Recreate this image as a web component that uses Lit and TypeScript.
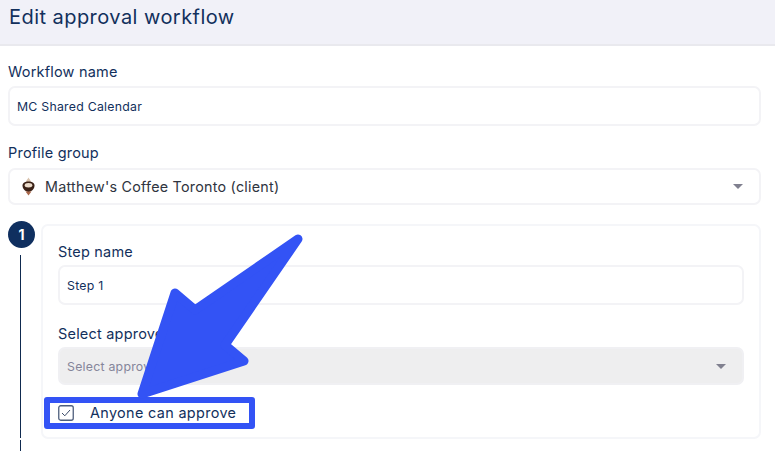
import { LitElement, html, css } from "lit";
import { customElement } from "lit/decorators.js";

@customElement("app-root")
export class AppRoot extends LitElement {
  static styles = css`
    :host {
      display: block;
      position: relative;
      width: 775px;
      height: 451px;
      overflow: hidden;
      background: #fff;
      font-family: "Inter", "Noto Sans", sans-serif;
      color: #0f2a52;
    }
    .header {
      height: 46px;
      box-sizing: border-box;
      background: #f1f1f8;
      border-bottom: 2px solid #e9e9ee;
      padding: 0 9px;
      display: flex;
      align-items: flex-start;
    }
    .title {
      font-size: 20px;
      line-height: 34px;
      font-weight: 400;
      color: #12305c;
      letter-spacing: 0.45px;
    }
    .body {
      padding: 0 14px 0 8px;
    }
    .label {
      font-size: 14.5px;
      line-height: 20px;
      color: #12305c;
      letter-spacing: 0.2px;
    }
    .l1 { padding-top: 16px; height: 24px; }
    .l2 { padding-top: 17px; height: 25px; }
    .field {
      box-sizing: border-box;
      border: 2px solid #f3f3f6;
      border-radius: 7px;
      background: #fff;
      display: flex;
      align-items: center;
      padding: 0 16px 0 7px;
      font-size: 12.3px;
      letter-spacing: 0.25px;
      color: #12305c;
    }
    .h40 { height: 40px; }
    .h38 { height: 38px; }
    .h37 { height: 37px; }
    .profile {
      font-size: 14.3px;
      color: #2f3440;
      letter-spacing: 0.25px;
      padding-left: 10px;
    }
    .profile svg.logo { margin-right: 8px; flex: none; }
    .grow { flex: 1; }
    .caret {
      width: 0;
      height: 0;
      border-left: 5px solid transparent;
      border-right: 5px solid transparent;
      border-top: 5px solid #80808f;
    }
    .step {
      display: grid;
      grid-template-columns: 27px 1fr;
      column-gap: 6px;
      margin-top: 19px;
    }
    .rail {
      display: flex;
      flex-direction: column;
      align-items: center;
      height: 230px;
      margin-top: -3px;
    }
    .num {
      width: 27px;
      height: 27px;
      border-radius: 50%;
      background: #0f2f5f;
      color: #fff;
      font-size: 14px;
      font-weight: 700;
      display: flex;
      align-items: center;
      justify-content: center;
      flex: none;
    }
    .line {
      width: 1.5px;
      background: #0f2a4f;
      margin-right: 2px;
    }
    .line.a { margin-top: 7px; height: 183px; }
    .line.b { margin-top: 2px; flex: 1; }
    .card {
      box-sizing: border-box;
      height: 215px;
      border: 2px solid #f5f6f9;
      border-radius: 7px;
      padding: 16px 15px 0;
    }
    .card .l3 { height: 23px; }
    .card .l4 { height: 23px; padding-top: 19px; }
    .disabled {
      background: #eeeeef;
      border-color: #f0f0f3;
      color: #85859a;
    }
    .check {
      display: flex;
      align-items: center;
      margin-top: 19px;
      font-size: 14.4px;
      letter-spacing: 0.35px;
      color: #12305c;
    }
    .check svg { margin-right: 16px; flex: none; }
    .anno {
      position: absolute;
      left: 44px;
      top: 397px;
      width: 211px;
      height: 32px;
      box-sizing: border-box;
      border: 6px solid #3353f5;
      border-radius: 3px;
    }
    .arrow {
      position: absolute;
      left: 0;
      top: 0;
      pointer-events: none;
    }
  `;

  render() {
    return html`
      <div class="header"><div class="title">Edit approval workflow</div></div>
      <div class="body">
        <div class="label l1">Workflow name</div>
        <div class="field h40">MC Shared Calendar</div>
        <div class="label l2">Profile group</div>
        <div class="field h37 profile">
          <svg class="logo" width="17" height="20" viewBox="0 0 17 20">
            <path d="M8.500 0.500c.8 1.800 2.500 3 2.500 4.500h-5c0-1.500 1.700-2.700 2.500-4.500z" fill="#d9c3ae" />
            <path d="M2.500 8.500c0-2.800 2.800-4 6-4s6 1.200 6 4c0 3.500-3 6-6 6.500-3-.5-6-3-6-6.500z" fill="#3a2116" />
            <ellipse cx="8.500" cy="8.300" rx="3.800" ry="2.200" fill="#ecdccb" />
            <path d="M5.500 14.500h6l-3 4z" fill="#a9674a" />
          </svg>
          <span>Matthew's Coffee Toronto (client)</span>
          <span class="grow"></span>
          <span class="caret"></span>
        </div>
        <div class="step">
          <div class="rail">
            <div class="num">1</div>
            <div class="line a"></div>
            <div class="line b"></div>
          </div>
          <div class="card">
            <div class="label l3">Step name</div>
            <div class="field h40">Step 1</div>
            <div class="label l4">Select approvers</div>
            <div class="field h38 disabled">
              <span>Select approvers</span>
              <span class="grow"></span>
              <span class="caret"></span>
            </div>
            <div class="check">
              <svg width="16" height="16" viewBox="0 0 16 16">
                <rect x="0.750" y="0.750" width="14.500" height="14.500" rx="2" fill="#fff" stroke="#4f5f7d" stroke-width="1.300" />
                <path d="M4 8l2.800 2.800L12 5" fill="none" stroke="#3a4a68" stroke-width="1" />
              </svg>
              <span>Anyone can approve</span>
            </div>
          </div>
        </div>
      </div>
      <div class="anno"></div>
      <svg class="arrow" width="775" height="451" viewBox="0 0 775 451">
        <path
          d="M298 239 L195 310 L175 293 L142 394 L244 361 L225 345 Z"
          fill="#3353f5"
          stroke="#3353f5"
          stroke-width="9"
          stroke-linejoin="round"
        />
      </svg>
    `;
  }
}
